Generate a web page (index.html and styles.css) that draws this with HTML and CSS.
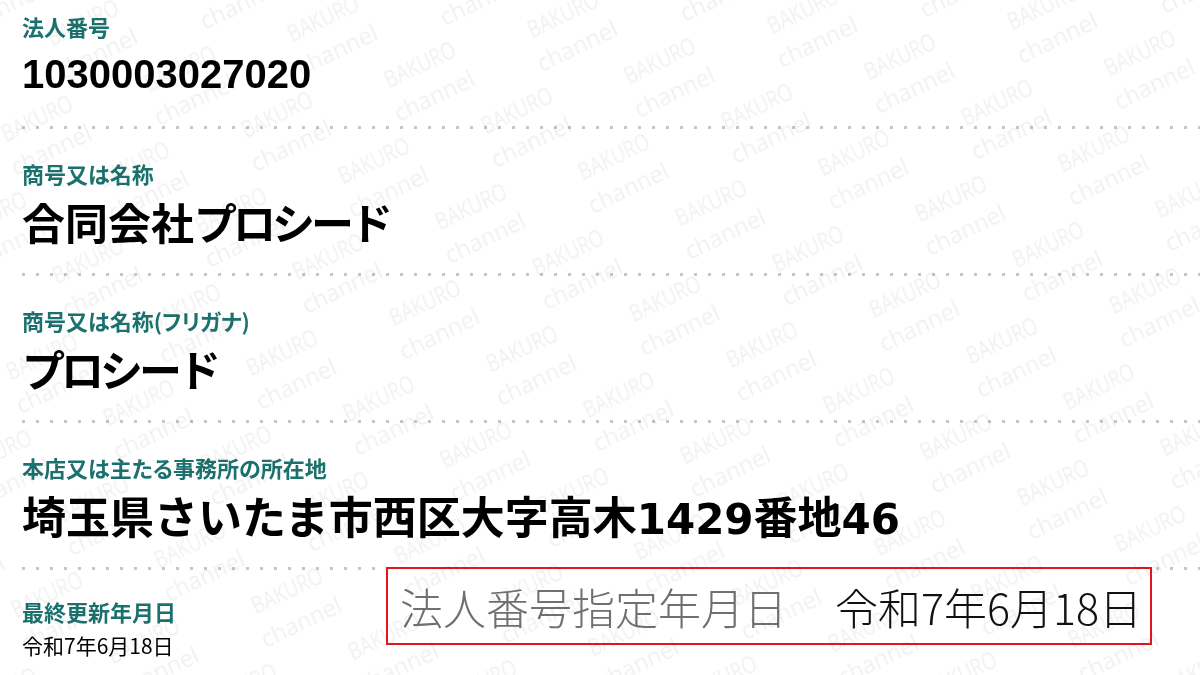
FILE: index.html
```html
<!DOCTYPE html>
<html lang="ja">
<head>
<meta charset="utf-8">
<title>法人番号</title>
<link rel="stylesheet" href="styles.css">
</head>
<body>
<div class="page">
  <section class="row first">
    <div class="label">法人番号</div>
    <div class="value num">1030003027020</div>
  </section>
  <div class="dots"></div>
  <section class="row">
    <div class="label">商号又は名称</div>
    <div class="value">合同会社<span class="k">プロシード</span></div>
  </section>
  <div class="dots"></div>
  <section class="row">
    <div class="label">商号又は名称(フリガナ)</div>
    <div class="value"><span class="k">プロシード</span></div>
  </section>
  <div class="dots"></div>
  <section class="row">
    <div class="label">本店又は主たる事務所の所在地</div>
    <div class="value addr">埼玉県さいたま市西区大字高木<span class="d">1429</span>番地<span class="d">46</span></div>
  </section>
  <div class="dots"></div>
  <section class="row last">
    <div class="label">最終更新年月日</div>
    <div class="small">令和7年6月18日</div>
  </section>

  <div class="callout">
    <span class="c-label">法人番号指定年月日</span>
    <span class="c-date">令和7年6月18日</span>
  </div>

  <svg class="wm" width="1200" height="675" viewBox="0 0 1200 675" aria-hidden="true">
    <defs>
      <g id="m" transform="rotate(-24)">
        <text x="0" y="-8.5" text-anchor="middle" textLength="76" lengthAdjust="spacingAndGlyphs">BAKURO</text>
        <text x="0" y="25" text-anchor="middle" textLength="86" lengthAdjust="spacingAndGlyphs">channel</text>
      </g>
      <pattern id="p" patternUnits="userSpaceOnUse" width="240" height="230" patternTransform="matrix(1 -0.016667 0.0217 1.0348 570 30)">
        <use href="#m" x="0" y="0"/>
        <use href="#m" x="240" y="0"/>
        <use href="#m" x="0" y="230"/>
        <use href="#m" x="240" y="230"/>
        <use href="#m" x="96" y="46"/>
        <use href="#m" x="192" y="92"/>
        <use href="#m" x="-48" y="92"/>
        <use href="#m" x="48" y="138"/>
        <use href="#m" x="144" y="184"/>
      </pattern>
    </defs>
    <rect x="0" y="0" width="1200" height="675" fill="url(#p)"/>
  </svg>
</div>
</body>
</html>
```

FILE: styles.css
```css
html, body {
  margin: 0;
  padding: 0;
  background: #ffffff;
}

body {
  font-family: "Noto Sans CJK JP", "Noto Sans", sans-serif;
  color: #000;
}

.page {
  position: relative;
  width: 1200px;
  height: 675px;
  overflow: hidden;
}

.row {
  display: flex;
  flex-direction: column;
  gap: 13px;
  padding: 33px 0 28px 22px;
}

.row.first {
  padding-top: 15px;
}

.row.last {
  gap: 11px;
  padding-top: 30px;
}

.label {
  font-size: 22px;
  line-height: 22px;
  font-weight: 700;
  color: #1b716d;
  font-feature-settings: "palt";
  white-space: nowrap;
}

.value {
  height: 48px;
  font-size: 43px;
  line-height: 48px;
  font-weight: 700;
  color: #000;
  white-space: nowrap;
}

.value .k {
  letter-spacing: -4px;
}

.value.num {
  font-family: "Liberation Sans", Arial, sans-serif;
  font-size: 40px;
}

.value.addr {
  font-size: 44px;
}

.value .d {
  font-family: "DejaVu Sans", sans-serif;
  font-size: 42px;
  line-height: 1;
}

.small {
  font-size: 21px;
  line-height: 24px;
  font-weight: 400;
  color: #000;
  white-space: nowrap;
}

.dots {
  margin-left: 22px;
  height: 3px;
  background-image: linear-gradient(to right, #c6c6c6 0, #c6c6c6 3px, transparent 3px, transparent 14px);
  background-size: 14px 3px;
  background-repeat: repeat-x;
}

.callout {
  position: absolute;
  left: 386px;
  top: 567px;
  width: 766px;
  height: 78px;
  box-sizing: border-box;
  border: 2px solid #e4161c;
  background: #ffffff;
  display: flex;
  align-items: center;
  gap: 48px;
  padding-left: 12px;
  font-size: 43px;
  line-height: 48px;
  font-weight: 300;
  white-space: nowrap;
}

.c-label {
  color: #707070;
}

.c-date {
  color: #111;
}

.wm {
  position: absolute;
  left: 0;
  top: 0;
  pointer-events: none;
  mix-blend-mode: multiply;
  font-family: "Open Sans", "DejaVu Sans", sans-serif;
  font-size: 23px;
  fill: #f1f1f1;
}
```
